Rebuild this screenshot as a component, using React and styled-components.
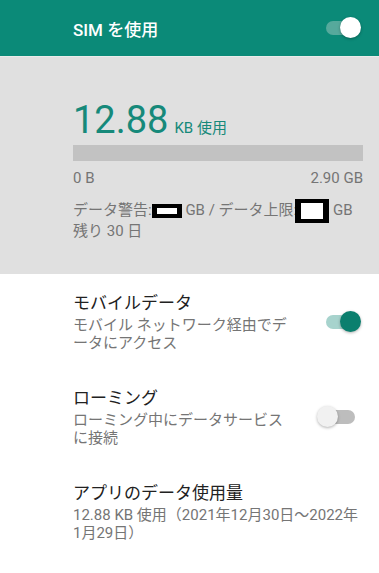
import React from "react";
import styled, { createGlobalStyle } from "styled-components";

const Global = createGlobalStyle`
  html, body { margin: 0; padding: 0; background: #ffffff; }
  body { font-family: Roboto, "Noto Sans CJK JP", sans-serif; }
  #root { width: 379px; }
`;

const Page = styled.div`
  width: 379px;
  min-height: 573px;
  background: #ffffff;
`;

const Header = styled.header`
  height: 56px;
  background: #0b8a78;
  border-bottom: 1px solid #e9ecea;
  display: flex;
  align-items: center;
  justify-content: space-between;
  padding: 0 18px 0 73px;
`;

const HeaderTitle = styled.div`
  color: #ffffff;
  font-size: 17px;
  font-weight: 500;
`;

const SwitchBox = styled.div`
  position: relative;
  width: 44px;
  height: 22px;
  flex: none;
`;

const Track = styled.div`
  position: absolute;
  left: 9px;
  top: 4px;
  width: 29px;
  height: 14px;
  border-radius: 7px;
  background: ${(p) => p.$color};
`;

const Thumb = styled.div`
  position: absolute;
  top: 0;
  ${(p) => (p.$on ? "right: 0;" : "left: 0;")}
  width: 21px;
  height: 21px;
  border-radius: 50%;
  background: ${(p) => p.$color};
  box-shadow: 0 1px 3px rgba(0, 0, 0, 0.3);
`;

const Switch = ({ on, track, thumb }) => (
  <SwitchBox>
    <Track $color={track} />
    <Thumb $on={on} $color={thumb} />
  </SwitchBox>
);

const Summary = styled.section`
  background: #e0e0e0;
  padding: 41px 16px 32px 73px;
`;

const BigLine = styled.div`
  font-size: 38px;
  line-height: 44px;
  height: 44px;
  color: #16897a;
  white-space: nowrap;
`;

const BigUnit = styled.span`
  font-size: 15px;
  line-height: 15px;
  margin-left: 6px;
`;

const Bar = styled.div`
  margin-top: 3px;
  height: 16px;
  background: #c2c2c2;
`;

const RangeRow = styled.div`
  margin-top: 7px;
  display: flex;
  justify-content: space-between;
  font-size: 15px;
  line-height: 20px;
  color: #757575;
`;

const Limits = styled.div`
  margin-top: 12px;
  font-size: 15px;
  line-height: 21px;
  color: #757575;
`;

const Redact = styled.span`
  display: inline-block;
  vertical-align: middle;
  box-sizing: border-box;
  width: ${(p) => p.$w}px;
  height: ${(p) => p.$h}px;
  margin: ${(p) => -p.$h / 2}px 0 ${(p) => -p.$h / 2}px ${(p) => p.$ml || 0}px;
  background: #ffffff;
  border-style: solid;
  border-color: #000000;
  border-width: ${(p) => p.$bw};
`;

const List = styled.div`
  display: flex;
  flex-direction: column;
`;

const Item = styled.div`
  display: flex;
  align-items: center;
  justify-content: space-between;
  padding: 18px 18px 17px 73px;
`;

const Texts = styled.div`
  width: ${(p) => (p.$wide ? "auto" : "218px")};
  flex: ${(p) => (p.$wide ? "1" : "none")};
`;

const Title = styled.div`
  font-size: 17px;
  line-height: 22px;
  color: #212121;
`;

const Sub = styled.div`
  margin-top: 2px;
  font-size: 15px;
  line-height: 18px;
  color: #757575;
`;

export default function App() {
  return (
    <Page>
      <Global />
      <Header>
        <HeaderTitle>SIM を使用</HeaderTitle>
        <Switch on track="#56a99c" thumb="#ffffff" />
      </Header>
      <Summary>
        <BigLine>
          12.88
          <BigUnit>KB 使用</BigUnit>
        </BigLine>
        <Bar />
        <RangeRow>
          <span>0 B</span>
          <span>2.90 GB</span>
        </RangeRow>
        <Limits>
          データ警告:
          <Redact $w={30} $h={14} $bw="4px 5px" />
          {" "}GB / データ上限:
          <Redact $w={34} $h={24} $bw="4px 6px" $ml={-2} />
          {" "}GB
          <br />
          残り 30 日
        </Limits>
      </Summary>
      <List>
        <Item>
          <Texts>
            <Title>モバイルデータ</Title>
            <Sub>モバイル ネットワーク経由でデータにアクセス</Sub>
          </Texts>
          <Switch on track="#a7d3cd" thumb="#0b7f6e" />
        </Item>
        <Item>
          <Texts>
            <Title>ローミング</Title>
            <Sub>ローミング中にデータサービスに接続</Sub>
          </Texts>
          <Switch track="#bdbdbd" thumb="#f1f1f1" />
        </Item>
        <Item>
          <Texts $wide>
            <Title>アプリのデータ使用量</Title>
            <Sub>12.88 KB 使用（2021年12月30日～2022年1月29日）</Sub>
          </Texts>
        </Item>
      </List>
    </Page>
  );
}
